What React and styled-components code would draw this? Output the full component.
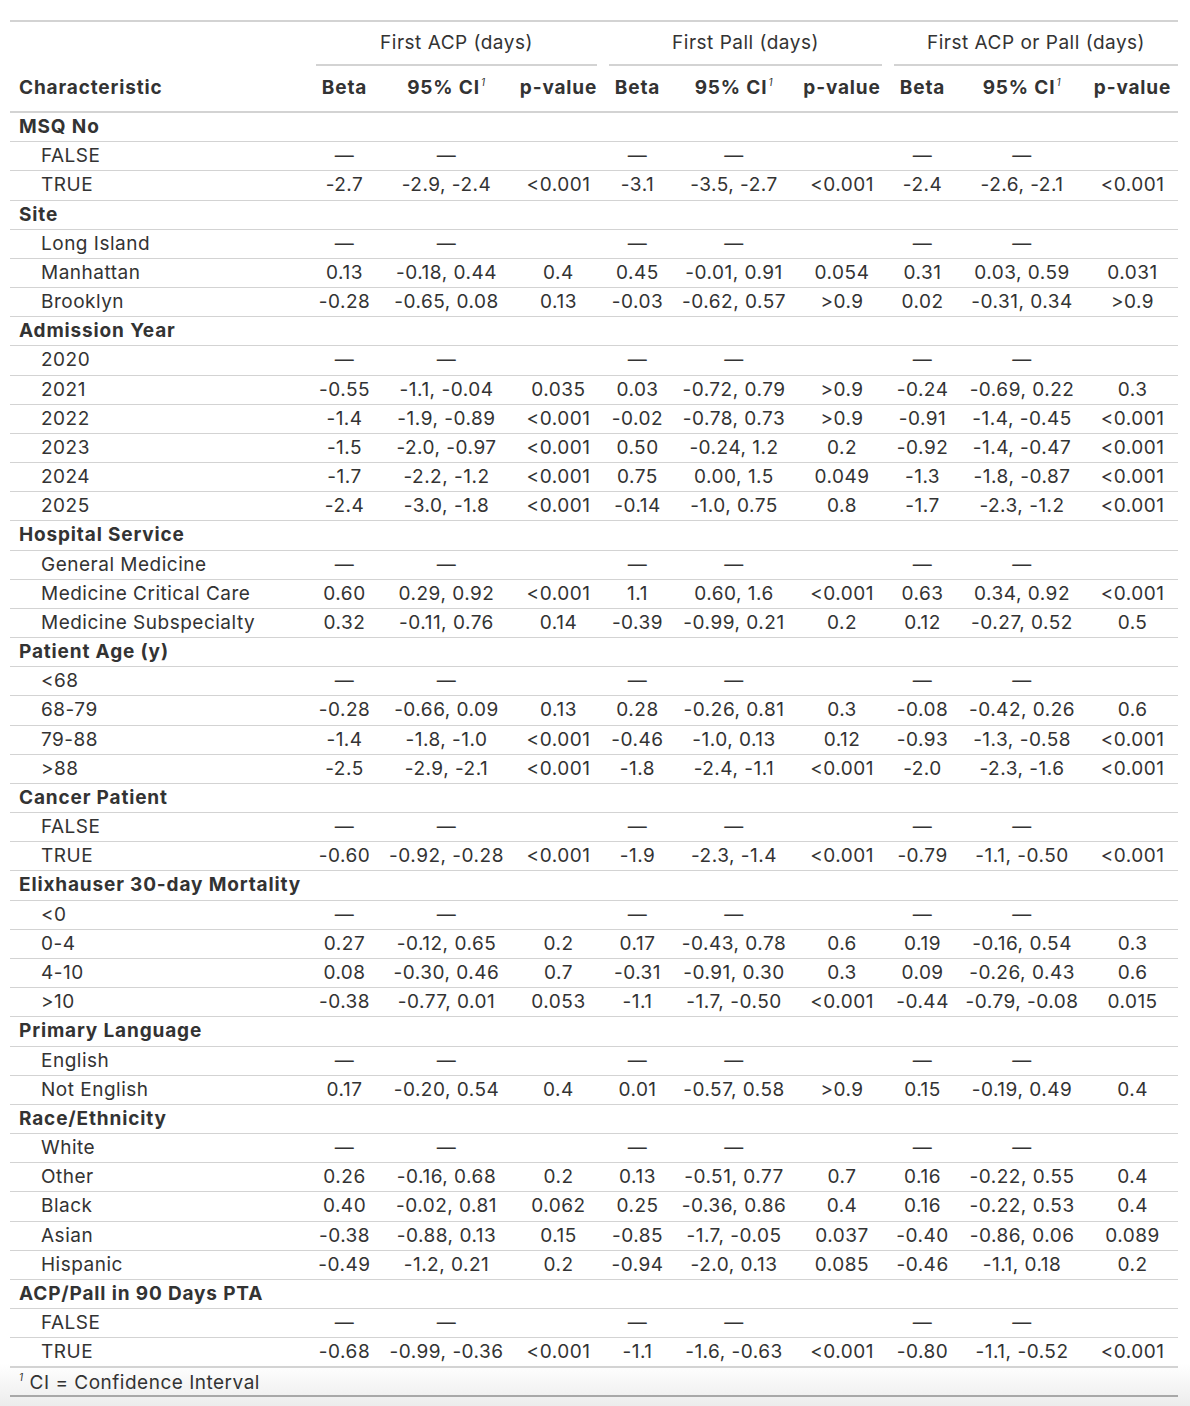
import React from 'react'
import styled, { createGlobalStyle } from 'styled-components'

const GlobalStyle = createGlobalStyle`
  html, body {
    margin: 0;
    padding: 0;
  }
  body {
    min-height: 1406px;
    background: linear-gradient(to bottom, #ffffff 0, #ffffff 1364px, #ececec 1406px);
    font-family: Inter, "Noto Sans", "Liberation Sans", sans-serif;
    color: #333333;
  }
`

const Page = styled.div`
  padding: 20px 12px 0 10px;
`

const Table = styled.table`
  width: 1168px;
  table-layout: fixed;
  border-collapse: collapse;
  font-size: 19px;
  letter-spacing: 0.5px;
  border-top: 2px solid #d3d3d3;
  border-bottom: 2px solid #a8a8a8;
`

const StubHead = styled.th`
  text-align: left;
  vertical-align: bottom;
  font-weight: 700;
  letter-spacing: 0.85px;
  line-height: 22px;
  padding: 0 5px 12px 9px;
  border-bottom: 2px solid #d3d3d3;
`

const SpannerCell = styled.th`
  font-weight: 400;
  line-height: 22px;
  padding: 10px ${p => (p.$last ? '0' : '6px')} 0 6px;
`

const SpannerLabel = styled.div`
  padding-bottom: 10px;
  border-bottom: 2px solid #d3d3d3;
  text-align: center;
`

const ColHead = styled.th`
  font-weight: 700;
  letter-spacing: 0.85px;
  line-height: 22px;
  padding: 11px 2px 12px;
  text-align: center;
  white-space: nowrap;
  border-bottom: 2px solid #d3d3d3;
`

const Mark = styled.sup`
  font-style: italic;
  font-weight: 400;
  font-size: 10px;
  line-height: 0;
  vertical-align: 8px;
  margin-left: 1px;
`

const Row = styled.tr`
  border-bottom: 1px solid #d3d3d3;
  &:last-child {
    border-bottom: 2px solid #d3d3d3;
  }
`

const Label = styled.td`
  text-align: left;
  font-weight: ${p => (p.$group ? 700 : 400)};
  letter-spacing: ${p => (p.$group ? '0.85px' : '0.5px')};
  padding: 4px 5px 4px ${p => (p.$group ? '9px' : '31px')};
  line-height: 20.17px;
  white-space: nowrap;
`

const Cell = styled.td`
  text-align: center;
  padding: 4px 0;
  line-height: 20.17px;
  white-space: nowrap;
`

const FootCell = styled.td`
  padding: 5px 5px 2px 9px;
  line-height: 20px;
`

const FootMark = styled.sup`
  font-style: italic;
  font-size: 10px;
  line-height: 0;
  vertical-align: 8px;
  margin-right: 6px;
`

const widths = [300, 69, 135, 89, 69, 124, 92, 69, 130, 91]

const groups = ['First ACP (days)', 'First Pall (days)', 'First ACP or Pall (days)']

const REF = '—|—||—|—||—|—|'

// label, then row string: beta|ci|p for each of the three models
const data = [
  ['MSQ No'],
  ['FALSE', REF],
  ['TRUE', '-2.7|-2.9, -2.4|<0.001|-3.1|-3.5, -2.7|<0.001|-2.4|-2.6, -2.1|<0.001'],
  ['Site'],
  ['Long Island', REF],
  ['Manhattan', '0.13|-0.18, 0.44|0.4|0.45|-0.01, 0.91|0.054|0.31|0.03, 0.59|0.031'],
  ['Brooklyn', '-0.28|-0.65, 0.08|0.13|-0.03|-0.62, 0.57|>0.9|0.02|-0.31, 0.34|>0.9'],
  ['Admission Year'],
  ['2020', REF],
  ['2021', '-0.55|-1.1, -0.04|0.035|0.03|-0.72, 0.79|>0.9|-0.24|-0.69, 0.22|0.3'],
  ['2022', '-1.4|-1.9, -0.89|<0.001|-0.02|-0.78, 0.73|>0.9|-0.91|-1.4, -0.45|<0.001'],
  ['2023', '-1.5|-2.0, -0.97|<0.001|0.50|-0.24, 1.2|0.2|-0.92|-1.4, -0.47|<0.001'],
  ['2024', '-1.7|-2.2, -1.2|<0.001|0.75|0.00, 1.5|0.049|-1.3|-1.8, -0.87|<0.001'],
  ['2025', '-2.4|-3.0, -1.8|<0.001|-0.14|-1.0, 0.75|0.8|-1.7|-2.3, -1.2|<0.001'],
  ['Hospital Service'],
  ['General Medicine', REF],
  ['Medicine Critical Care', '0.60|0.29, 0.92|<0.001|1.1|0.60, 1.6|<0.001|0.63|0.34, 0.92|<0.001'],
  ['Medicine Subspecialty', '0.32|-0.11, 0.76|0.14|-0.39|-0.99, 0.21|0.2|0.12|-0.27, 0.52|0.5'],
  ['Patient Age (y)'],
  ['<68', REF],
  ['68-79', '-0.28|-0.66, 0.09|0.13|0.28|-0.26, 0.81|0.3|-0.08|-0.42, 0.26|0.6'],
  ['79-88', '-1.4|-1.8, -1.0|<0.001|-0.46|-1.0, 0.13|0.12|-0.93|-1.3, -0.58|<0.001'],
  ['>88', '-2.5|-2.9, -2.1|<0.001|-1.8|-2.4, -1.1|<0.001|-2.0|-2.3, -1.6|<0.001'],
  ['Cancer Patient'],
  ['FALSE', REF],
  ['TRUE', '-0.60|-0.92, -0.28|<0.001|-1.9|-2.3, -1.4|<0.001|-0.79|-1.1, -0.50|<0.001'],
  ['Elixhauser 30-day Mortality'],
  ['<0', REF],
  ['0-4', '0.27|-0.12, 0.65|0.2|0.17|-0.43, 0.78|0.6|0.19|-0.16, 0.54|0.3'],
  ['4-10', '0.08|-0.30, 0.46|0.7|-0.31|-0.91, 0.30|0.3|0.09|-0.26, 0.43|0.6'],
  ['>10', '-0.38|-0.77, 0.01|0.053|-1.1|-1.7, -0.50|<0.001|-0.44|-0.79, -0.08|0.015'],
  ['Primary Language'],
  ['English', REF],
  ['Not English', '0.17|-0.20, 0.54|0.4|0.01|-0.57, 0.58|>0.9|0.15|-0.19, 0.49|0.4'],
  ['Race/Ethnicity'],
  ['White', REF],
  ['Other', '0.26|-0.16, 0.68|0.2|0.13|-0.51, 0.77|0.7|0.16|-0.22, 0.55|0.4'],
  ['Black', '0.40|-0.02, 0.81|0.062|0.25|-0.36, 0.86|0.4|0.16|-0.22, 0.53|0.4'],
  ['Asian', '-0.38|-0.88, 0.13|0.15|-0.85|-1.7, -0.05|0.037|-0.40|-0.86, 0.06|0.089'],
  ['Hispanic', '-0.49|-1.2, 0.21|0.2|-0.94|-2.0, 0.13|0.085|-0.46|-1.1, 0.18|0.2'],
  ['ACP/Pall in 90 Days PTA'],
  ['FALSE', REF],
  ['TRUE', '-0.68|-0.99, -0.36|<0.001|-1.1|-1.6, -0.63|<0.001|-0.80|-1.1, -0.52|<0.001'],
]

export default function App() {
  return (
    <>
      <GlobalStyle />
      <Page>
        <Table>
          <colgroup>
            {widths.map((w, i) => <col key={i} style={{ width: w }} />)}
          </colgroup>
          <thead>
            <tr>
              <StubHead rowSpan={2}>Characteristic</StubHead>
              {groups.map((g, i) => (
                <SpannerCell key={g} colSpan={3} $last={i === groups.length - 1}>
                  <SpannerLabel>{g}</SpannerLabel>
                </SpannerCell>
              ))}
            </tr>
            <tr>
              {groups.map(g => (
                <React.Fragment key={g}>
                  <ColHead>Beta</ColHead>
                  <ColHead>95% CI<Mark>1</Mark></ColHead>
                  <ColHead>p-value</ColHead>
                </React.Fragment>
              ))}
            </tr>
          </thead>
          <tbody>
            {data.map(([label, values], i) => (
              <Row key={i}>
                {values ? (
                  <>
                    <Label>{label}</Label>
                    {values.split('|').map((v, j) => <Cell key={j}>{v}</Cell>)}
                  </>
                ) : (
                  <Label $group colSpan={10}>{label}</Label>
                )}
              </Row>
            ))}
          </tbody>
          <tfoot>
            <tr>
              <FootCell colSpan={10}>
                <FootMark>1</FootMark>CI = Confidence Interval
              </FootCell>
            </tr>
          </tfoot>
        </Table>
      </Page>
    </>
  )
}
